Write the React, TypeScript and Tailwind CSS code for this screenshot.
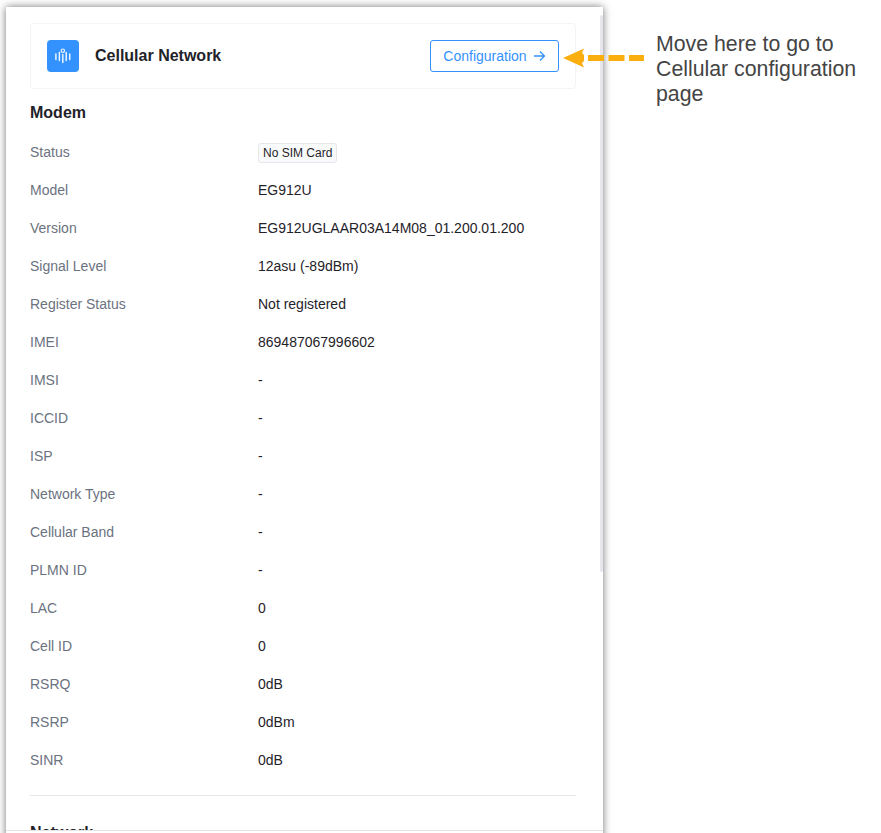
import React from 'react';

const rows: { label: string; value: string }[] = [
  { label: 'Model', value: 'EG912U' },
  { label: 'Version', value: 'EG912UGLAAR03A14M08_01.200.01.200' },
  { label: 'Signal Level', value: '12asu (-89dBm)' },
  { label: 'Register Status', value: 'Not registered' },
  { label: 'IMEI', value: '869487067996602' },
  { label: 'IMSI', value: '-' },
  { label: 'ICCID', value: '-' },
  { label: 'ISP', value: '-' },
  { label: 'Network Type', value: '-' },
  { label: 'Cellular Band', value: '-' },
  { label: 'PLMN ID', value: '-' },
  { label: 'LAC', value: '0' },
  { label: 'Cell ID', value: '0' },
  { label: 'RSRQ', value: '0dB' },
  { label: 'RSRP', value: '0dBm' },
  { label: 'SINR', value: '0dB' },
];

const Row: React.FC<{ label: string; children: React.ReactNode }> = ({ label, children }) => (
  <div className="flex h-[38px] items-center text-[14px]">
    <div className="w-[228px] shrink-0 text-[#6b7280]">{label}</div>
    <div className="text-[#1f2329]">{children}</div>
  </div>
);

const CellularIcon = () => (
  <svg width="32" height="32" viewBox="0 0 32 32" fill="none" stroke="#eaf4ff" strokeLinecap="round">
    <circle cx="15.8" cy="10.7" r="1.7" strokeWidth="1.2" />
    <path d="M15.8 14.5V22.5" strokeWidth="1.5" />
    <path d="M12.4 12.5V20.5" strokeWidth="1.5" />
    <path d="M19.2 12.5V20.5" strokeWidth="1.5" />
    <path d="M8.9 14V19.5" strokeWidth="1.5" />
    <path d="M22.7 14V19.5" strokeWidth="1.5" />
  </svg>
);

const App: React.FC = () => (
  <div className="relative flex h-[833px] w-[881px] items-start overflow-hidden bg-white font-['Liberation_Sans',Arial,sans-serif]">
    <div className="relative ml-[6px] mt-[7px] h-[840px] w-[597px] shrink-0 bg-white shadow-[0_0_8px_rgba(0,0,0,0.55)]">
      <div className="px-[24px] pt-[16px]">
        <div className="flex h-[66px] w-[546px] items-center justify-between rounded-[4px] border border-[#f3f4f6] pl-[16px] pr-[16px]">
          <div className="flex items-center gap-[16px]">
            <div className="flex h-[32px] w-[32px] items-center justify-center rounded-[4px] bg-[#3492ff]">
              <CellularIcon />
            </div>
            <div className="text-[16px] font-bold text-[#1f2329]">Cellular Network</div>
          </div>
          <div className="flex h-[32px] w-[129px] items-center justify-center gap-[6px] rounded-[3px] border border-[#3492ff] text-[14px] text-[#3492ff]">
            <span>Configuration</span>
            <svg width="13" height="12" viewBox="0 0 13 12" fill="none" stroke="currentColor" strokeWidth="1.3">
              <path d="M1 6H11.5M7 1.5L11.5 6L7 10.5" />
            </svg>
          </div>
        </div>
        <div className="mt-[14px] h-[20px] text-[16px] font-bold leading-[20px] text-[#1f2329]">Modem</div>
        <div className="mt-[10px] w-[546px]">
          <Row label="Status">
            <span className="inline-flex h-[20px] items-center rounded-[3px] border border-[#e5e7eb] bg-[#f9fafb] px-[4px] text-[12px]">
              No SIM Card
            </span>
          </Row>
          {rows.map(r => (
            <Row key={r.label} label={r.label}>{r.value}</Row>
          ))}
        </div>
        <div className="mt-[16px] w-[546px] border-t border-[#e5e7eb]" />
        <div className="mt-[27px] text-[16px] font-bold leading-[20px] text-[#1f2329]">Network</div>
      </div>
      {/* scrollbar thumb */}
      <div className="absolute right-0 top-[8px] h-[557px] w-[3px] rounded-[2px] bg-[#e6e6ec]" />
    </div>

    {/* cut-off line at the bottom of the capture */}
    <div className="absolute bottom-[2px] left-[6px] h-px w-[597px] bg-[#e5e5e5]" />
    <div className="absolute bottom-0 left-[6px] h-[2px] w-[597px] bg-white" />

    <svg className="absolute left-[562px] top-[46px] blur-[0.4px]" width="84" height="24" viewBox="0 0 84 24" fill="none">
      <path d="M1 12L22 2.5L20 7L22 9V15L20 17L22 21.5Z" fill="#fbae10" />
      <path d="M26 12H82" stroke="#fbae10" strokeWidth="6" strokeDasharray="16 4.5" />
    </svg>

    <div className="absolute left-[656px] top-[32px] w-[215px] text-[21.3px] leading-[25px] text-[#444444]">
      Move here to go to Cellular configuration page
    </div>
  </div>
);

export default App;
